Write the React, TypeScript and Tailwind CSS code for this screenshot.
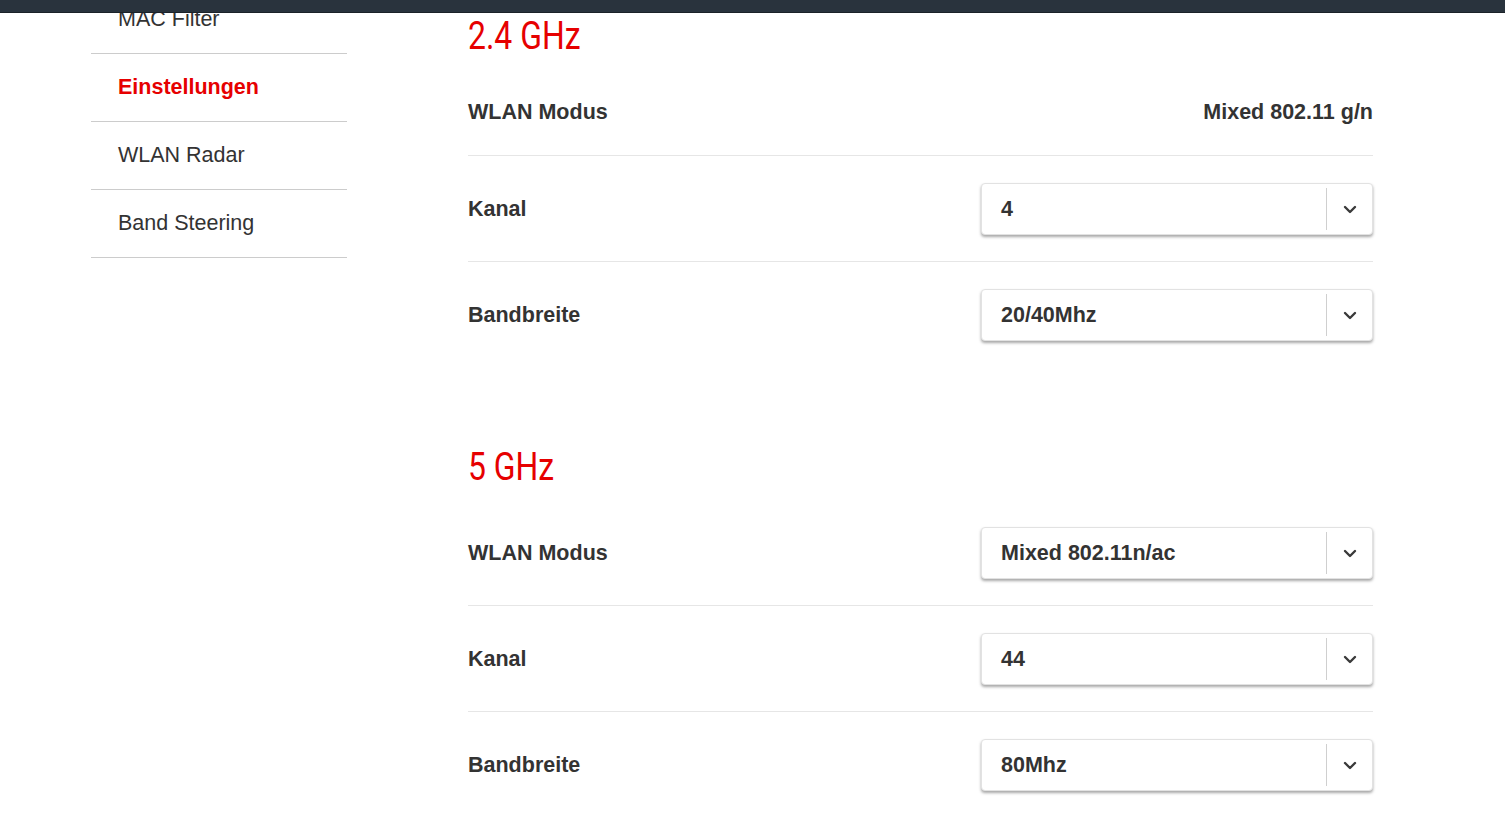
import React from "react";

const sans = { fontFamily: '"Liberation Sans", Arial, sans-serif' };

function Chevron() {
  return (
    <svg width="14" height="9" viewBox="0 0 14 9" fill="none">
      <path d="M2 2 L7 7 L12 2" stroke="#3a3a3a" strokeWidth="2.4" strokeLinecap="round" strokeLinejoin="round" />
    </svg>
  );
}

function Select({ value }: { value: string }) {
  return (
    <div className="flex h-[52px] w-[392px] items-stretch rounded-[4px] border border-[#e2e2e2] bg-white shadow-[0_2px_3px_rgba(0,0,0,0.35)]">
      <div className="flex flex-1 items-center pl-[19px] text-[21.5px] font-bold text-[#333]">{value}</div>
      <div className="my-[4px] w-px bg-[#cfcfcf]" />
      <div className="flex w-[45px] items-center justify-center">
        <Chevron />
      </div>
    </div>
  );
}

function Row({ label, children, last, select }: { label: string; children: React.ReactNode; last?: boolean; select?: boolean }) {
  return (
    <div
      className={
        "flex items-center justify-between " +
        (select ? "pt-[27px] pb-[26px] " : "py-[27px] ") +
        (last ? "" : "border-b border-[#e6e6e6]")
      }
    >
      <div className="text-[21.5px] font-bold leading-[32px] text-[#333]">{label}</div>
      {children}
    </div>
  );
}

function Heading({ text }: { text: string }) {
  return (
    <div className="mb-[10px] h-[46px]">
      <div
        className="inline-block origin-left scale-x-[0.84] text-[38px] leading-[46px] text-[#e60000]"
        style={{ fontFamily: 'Roboto, "Liberation Sans", sans-serif' }}
      >
        {text}
      </div>
    </div>
  );
}

export default function App() {
  const side = ["MAC Filter", "Einstellungen", "WLAN Radar", "Band Steering"];
  return (
    <div className="relative h-[837px] w-[1505px] overflow-hidden bg-white" style={sans}>
      <div className="absolute left-0 top-0 z-10 h-[13px] w-full border-b border-[#1b2229] bg-[#29333d]" />
      <div className="flex">
        <div className="ml-[91px] w-[256px] -mt-[14px]">
          {side.map((s) => (
            <div
              key={s}
              className={
                "flex h-[68px] items-center border-b border-[#cccccc] pl-[27px] text-[21.5px] " +
                (s === "Einstellungen" ? "font-bold text-[#e60000]" : "text-[#333]")
              }
            >
              {s}
            </div>
          ))}
        </div>
        <div className="ml-[121px] w-[905px] pt-[13px]">
          <Heading text="2.4 GHz" />
          <Row label="WLAN Modus">
            <div className="text-[21.5px] font-bold leading-[32px] text-[#333]">Mixed 802.11 g/n</div>
          </Row>
          <Row label="Kanal" select>
            <Select value="4" />
          </Row>
          <Row label="Bandbreite" select last>
            <Select value="20/40Mhz" />
          </Row>

          <div className="mt-[77px]">
            <Heading text="5 GHz" />
            <Row label="WLAN Modus" select>
              <Select value="Mixed 802.11n/ac" />
            </Row>
            <Row label="Kanal" select>
              <Select value="44" />
            </Row>
            <Row label="Bandbreite" select last>
              <Select value="80Mhz" />
            </Row>
          </div>
        </div>
      </div>
    </div>
  );
}
